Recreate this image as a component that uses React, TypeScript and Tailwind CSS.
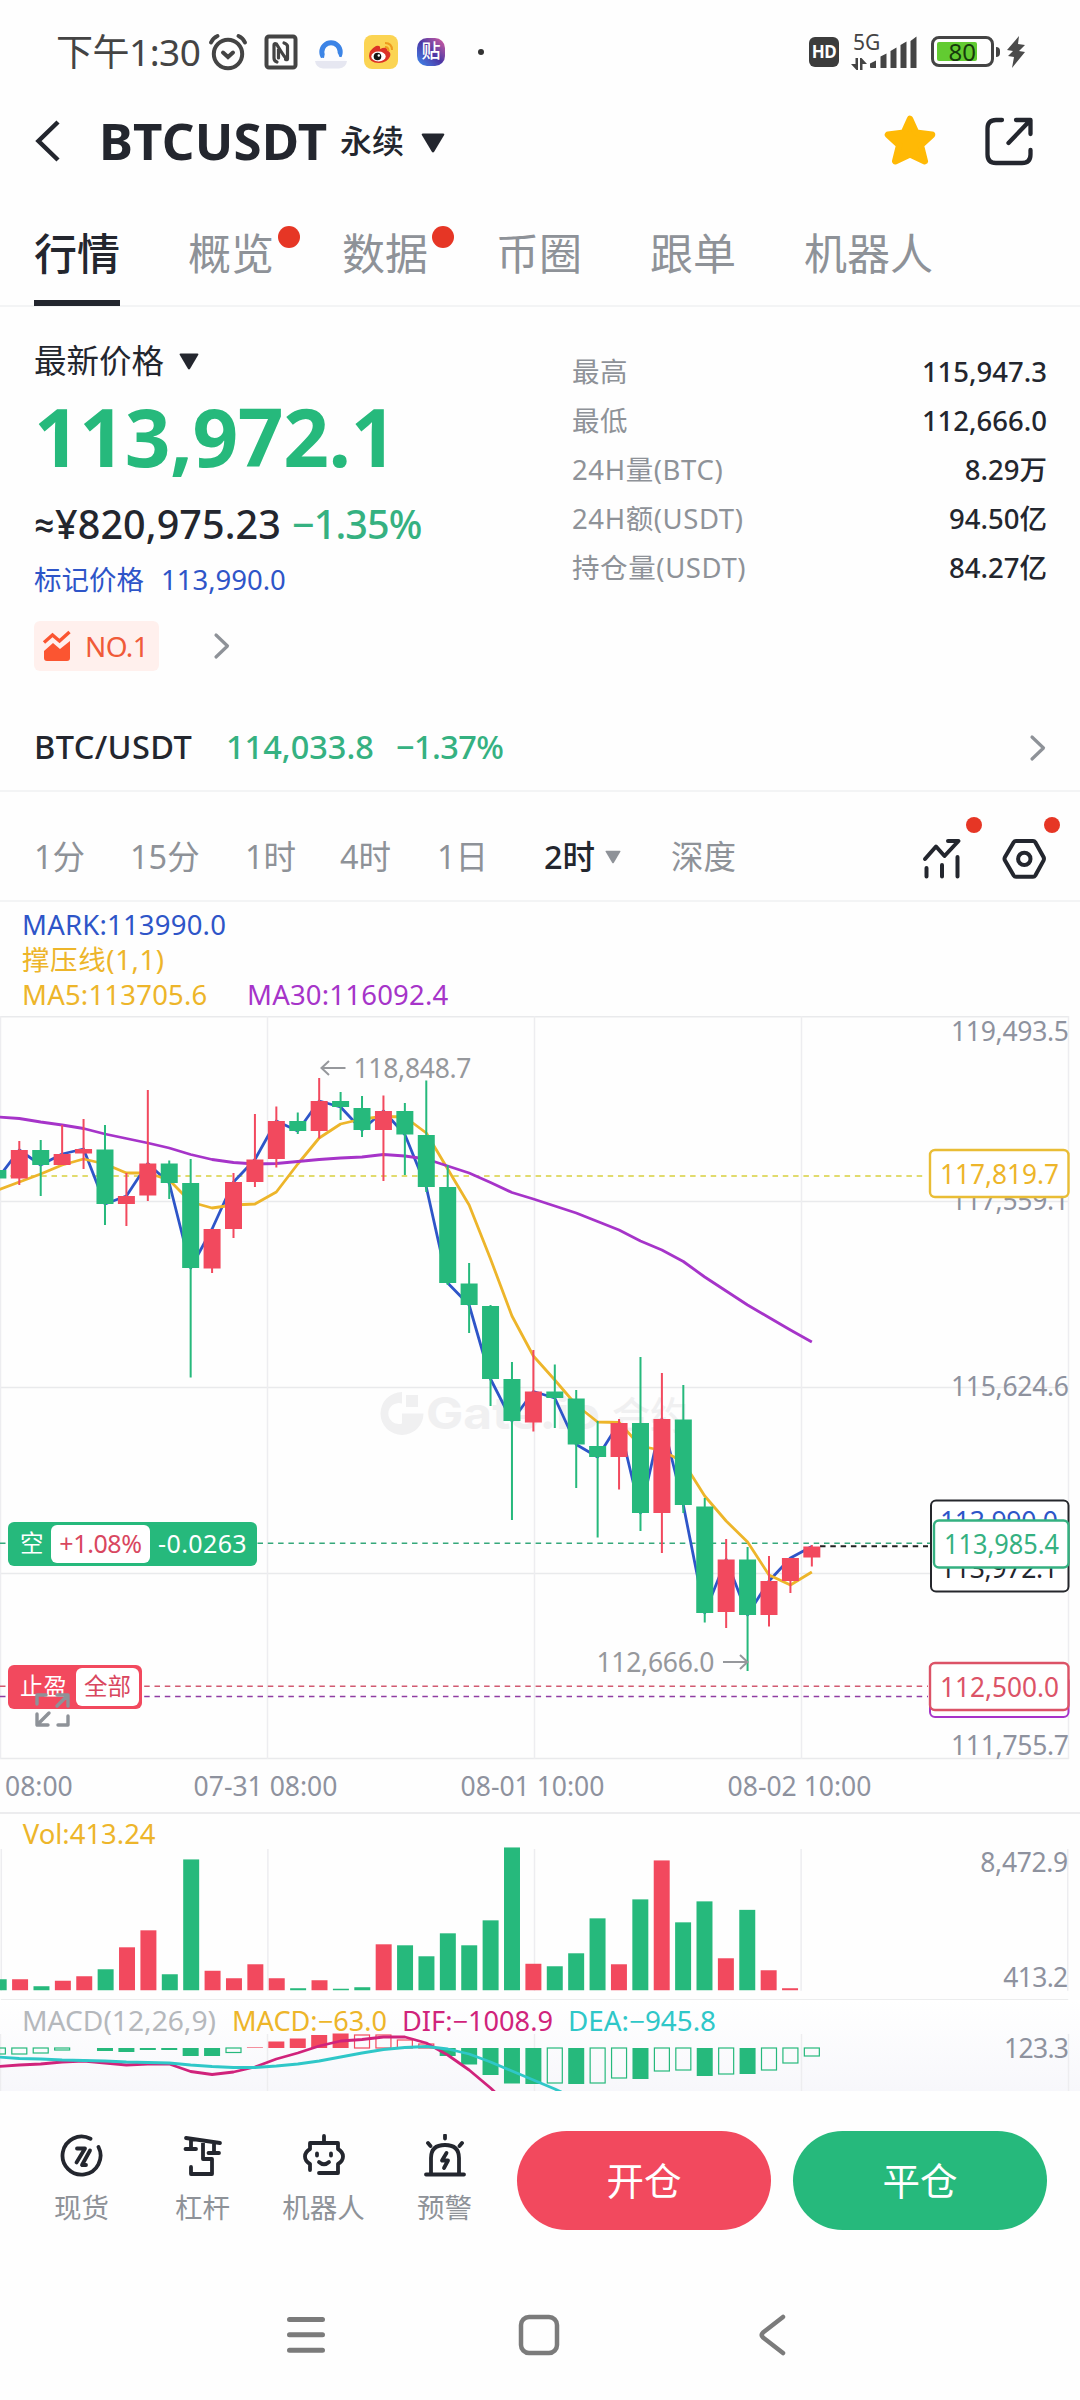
import type { ReactNode } from 'react'
import clsx from 'clsx'

const GREEN = '#26b97c'
const RED = '#f2495e'
const AMBER = '#edb52a'
const BLUE = '#2e55c8'
const PURPLE = '#a634c9'

const STEP = 21.42
const FIRST_X = 19.3
const BODY_W = 17

type Candle = {
  up: boolean
  high: number
  top: number
  bottom: number
  low: number
}

const c = (up: number, high: number, top: number, bottom: number, low: number): Candle => ({
  up: up === 1,
  high,
  top,
  bottom,
  low,
})

// first candle is cut off by the left edge
const candles: Candle[] = [
  c(0, 153, 154, 162.5, 163),
  c(1, 125, 134, 162.5, 169),
  c(0, 124, 134, 149, 180),
  c(1, 109, 138, 149, 149),
  c(1, 103, 133, 137.5, 153),
  c(0, 109, 133.5, 188, 209),
  c(1, 157, 180, 188, 210),
  c(1, 74, 147.5, 179.5, 185),
  c(0, 144.5, 147.5, 167, 183),
  c(0, 143, 167, 252, 361.5),
  c(1, 213, 213, 252.5, 257),
  c(1, 157, 166, 213, 222),
  c(1, 98, 143.5, 166, 171),
  c(1, 90.5, 105, 143, 151.5),
  c(0, 96.5, 105, 115, 118),
  c(1, 62, 85, 115, 122.5),
  c(0, 76, 85, 91, 104),
  c(0, 80, 92, 114, 121),
  c(1, 79.5, 95, 114, 165),
  c(0, 87, 95, 118.5, 159),
  c(0, 64.5, 119, 171, 176),
  c(0, 149, 171, 267, 269),
  c(0, 247, 267.5, 289, 317),
  c(0, 289, 290, 363, 390),
  c(0, 346, 363, 405, 504),
  c(1, 334, 375.5, 406.5, 415.5),
  c(0, 348.5, 375.5, 382, 412),
  c(0, 374, 382.5, 428.5, 472),
  c(0, 405, 430, 441, 521.5),
  c(1, 403, 407, 441, 473.5),
  c(0, 341, 407, 497, 515),
  c(1, 357, 403, 497, 537),
  c(0, 369, 403.5, 489, 497),
  c(0, 482, 490.5, 597, 606.5),
  c(1, 523, 543.5, 596, 612),
  c(0, 531, 543.5, 599, 655),
  c(1, 540, 565, 599, 610.5),
  c(1, 542, 542, 565, 577),
  c(1, 529, 530.5, 541.5, 550.5),
]

const ma5 = [
  174, 166, 158, 149, 143, 148, 157, 157, 164, 186, 192, 189, 188, 176, 148, 122, 108, 103, 100.5,
  101, 117, 153, 189, 243, 300, 340, 364, 389, 406, 406.5, 430, 434.5, 446, 480, 505, 526, 559, 569,
  556,
]

const ma30 = [
  101, 102.5, 106, 109, 112.5, 118, 122.5, 127, 132, 138.5, 143.5, 146.5, 148, 147.5, 145.5, 143.5,
  142, 141, 138.5, 140, 143, 150, 157, 166.5, 176.5, 183, 190, 197, 205.5, 214, 225, 234, 245.5,
  261, 275, 289, 301.5, 314, 326,
]

const volumes = [
  11, 11, 4, 9.5, 14, 21, 43, 60, 16, 131, 19.5, 12, 26, 12, 2, 10, 1.5, 3, 46, 45, 34, 57, 45, 70,
  143, 26.5, 24, 37, 72, 26, 91, 130, 68, 89, 32, 80.5, 20, 2,
]

// [value, filled], positive values are drawn above the zero line
const macd: [number, boolean][] = [
  [-6, false], [-6, false], [-5, false], [-2, false], [0, true], [-3, true], [-4, true], [-2, true],
  [-2, true], [-8, true], [-8, true], [-4.5, false], [0.6, true], [6.5, true], [9.5, true],
  [13, true], [14.5, true], [13, false], [13, false], [8, false], [4, false], [-8, true],
  [-16.5, true], [-27, true], [-35.5, true], [-36, true], [-35, false], [-36, true], [-35, false],
  [-30, false], [-31, true], [-23, false], [-22, false], [-28, true], [-26, false], [-26, true],
  [-22, false], [-15, false], [-8, false],
]

const dif = [
  66.5, 65, 64, 62, 61, 63, 65, 64, 64, 71.5, 74.5, 72, 67, 59, 53, 46, 41, 39.5, 37, 37, 43, 55, 70,
  88, 108,
]

const dea = [
  57, 58.5, 59, 60, 60.5, 61, 62, 62.5, 63, 65, 66.5, 67.5, 67.5, 66, 64, 61, 57, 53, 49.5, 47.5,
  46.5, 49, 54, 62, 71, 80, 89, 99,
]

const xAt = (i: number) => FIRST_X + (i - 1) * STEP
const line = (ys: number[]) => ys.map((y, i) => `${xAt(i)},${y}`).join(' ')
const closes = candles.map((k) => (k.up ? k.top : k.bottom))

function Triangle({ className }: { className: string }) {
  return (
    <svg viewBox="0 0 24 20" className={className} fill="currentColor">
      <path d="M2 0.5h20q2 0 1 1.8L13.3 18.6q-1.3 1.8-2.6 0L1 2.3Q0 .5 2 .5z" />
    </svg>
  )
}

function ChevronRight({ className }: { className: string }) {
  return (
    <svg viewBox="0 0 18 28" className={className} fill="none" stroke="#8e9298" strokeWidth="3.2" strokeLinecap="round" strokeLinejoin="round">
      <path d="M3 3l11.5 11L3 25" />
    </svg>
  )
}

function StatusBar() {
  return (
    <div className="flex h-[104px] items-center pl-[56px] pr-[54px] text-[#444]">
      <span className="w-[152px] whitespace-nowrap text-[37px] leading-none tracking-[-0.5px]">下午1:30</span>
      <svg width="40" height="38" viewBox="0 0 40 38" fill="none" stroke="currentColor" strokeWidth="4" strokeLinecap="round">
        <circle cx="20" cy="21" r="14.2" />
        <path d="M3 9.5Q5 5 9.5 3M37 9.5Q35 5 30.500 3" />
        <path d="M15 19.500l5 4.500 5-4.500" />
      </svg>
      <svg className="ml-[16px]" width="34" height="36" viewBox="0 0 34 36" fill="none" stroke="currentColor" strokeWidth="4" strokeLinejoin="round" strokeLinecap="round">
        <rect x="2.500" y="2.500" width="29" height="31" rx="2.500" />
        <path strokeWidth="3.200" d="M13 28q-3-1-3-4V11q0-2 2.500-1 6.500 11 9.500 14.500M20 9q3 1 3.500 3v13q0 1-2 .5M14.500 15v9" />
      </svg>
      {/* browser, weibo and tieba notifications */}
      <svg className="ml-[16px]" width="34" height="36" viewBox="0 0 34 36">
        <circle cx="17" cy="18" r="9.200" fill="none" stroke="#3c84e6" strokeWidth="5" />
        <path d="M2 27q4-4 8-3 1-8 7.500-8 6 0 8 7 5-.5 7 5-1 6-8 6.500H9Q2 34 2 27z" fill="#fbfbfe" />
        <path d="M1 27h32q-1 7-8 7.500H9Q2 34 1 27z" fill="#e6e7f1" />
      </svg>
      <svg className="ml-[16px]" width="34" height="36" viewBox="0 0 34 36">
        <rect x="0" y="1" width="34" height="34" rx="8" fill="#fbd453" />
        <path d="M5 22q0-6 7-10 5-1 4 3 7-3 7.500 1.500 4 2 2.500 6Q23 29 15 29 5 28.500 5 22z" fill="#dc3226" />
        <ellipse cx="14.500" cy="22.500" rx="7.200" ry="5" fill="#fff" />
        <circle cx="13.500" cy="22.500" r="3.800" fill="#151515" />
        <circle cx="14.800" cy="21.500" r="1.200" fill="#fff" />
        <path d="M21 9q7 0 7 7M21 13q3.500 0 3.500 4" fill="none" stroke="#ee9a1d" strokeWidth="2" />
      </svg>
      <span className="ml-[19px] flex h-[28px] w-[28px] items-center justify-center rounded-[10px] bg-linear-to-bl from-[#e0569c] via-[#4a35a5] to-[#2f8bf0] text-[19px] font-medium leading-none text-white">
        贴
      </span>
      <span className="ml-[33px] h-[6px] w-[6px] rounded-full bg-[#333]" />

      <span className="ml-auto flex h-[30px] w-[30px] items-center justify-center rounded-[6px] bg-[#3c3c3c] text-[17px] font-bold leading-none tracking-[-0.5px] text-white">
        HD
      </span>
      <div className="ml-[12px] flex h-[36px] w-[19px] flex-col justify-between whitespace-nowrap">
        <span className="pl-[2px] text-[21px] leading-[17px]">5G</span>
        <svg width="16" height="12" viewBox="0 0 16 12" fill="currentColor">
          <path d="M4.500 0h2.500v12H5.500L0 6h4.500zM9 12V0h1.500L16 6h-4.500v6z" />
        </svg>
      </div>
      <svg className="-ml-px" width="50" height="34" viewBox="0 0 50 34" fill="currentColor">
        <path d="M1 32.500v-4l6-3v7.500H2zM11.500 33V21.500l6-3V33zM21.500 33V16l6-3.500V33zM31.500 33V10l6-3.500V33zM41.500 33V6l6-4.500V33z" />
      </svg>
      <span className="ml-[12px] flex h-[31px] w-[63px] rounded-[8px] border-[3px] border-[#444] p-[3px]">
        <span className="flex h-full w-[40px] items-center justify-end rounded-[2px] bg-[#62cb31] pr-px text-[24px] leading-none text-[#173a0c]">80</span>
      </span>
      <span className="ml-[2px] h-[10px] w-[4px] rounded-r bg-[#444]" />
      <svg className="ml-[6px]" width="20" height="32" viewBox="0 0 20 32" fill="#4a4a4a">
        <path d="M13 0L1 14l6 1-5 5 6 1-2 11L19 16l-6-1 6-6-7-1z" />
      </svg>
    </div>
  )
}

function Header() {
  return (
    <header className="flex h-[74px] items-center pl-[34px] pr-[46px] text-[#23262e]">
      <svg width="28" height="44" viewBox="0 0 28 44" fill="none" stroke="currentColor" strokeWidth="4.500">
        <path d="M24 3L4.500 22 24 41" />
      </svg>
      <h1 className="ml-[37px] w-[241px] whitespace-nowrap text-[51px] font-bold leading-none tracking-[0.2px]">BTCUSDT</h1>
      <span className="text-[32px] font-medium leading-none">永续</span>
      <Triangle className="ml-[17px] mt-1 h-[20px] w-[24px]" />
      <svg className="ml-auto" width="54" height="52" viewBox="0 0 54 52" fill="#ffb905">
        <path
          d="M27 4l6.200 13.800 15.800 2-11.200 10.400 4 16L27 39.200 12.200 46.200l4-16L5 19.800l15.800-2z"
          stroke="#ffb905"
          strokeWidth="6.500"
          strokeLinejoin="round"
        />
      </svg>
      <svg className="ml-[47px]" width="50" height="50" viewBox="0 0 50 50" fill="none" stroke="currentColor" strokeWidth="4.300" strokeLinecap="round" strokeLinejoin="round">
        <path d="M18 4H12q-8.500 0-8.500 8.500v26Q3.500 47 12 47h26q8.500 0 8.500-8.500V34" />
        <path d="M32 4h14.500v14M46 4.500L24.500 27" />
      </svg>
    </header>
  )
}

const tabs = [
  { name: '行情', active: true },
  { name: '概览', dot: true },
  { name: '数据', dot: true },
  { name: '币圈' },
  { name: '跟单' },
  { name: '机器人' },
]

function Tabs() {
  return (
    <nav className="flex h-[129px] gap-[68px] border-b-2 border-[#f3f4f5] pl-[34px]">
      {tabs.map((tab) => (
        <div
          key={tab.name}
          className={clsx(
            'relative flex h-[128px] items-center border-b-[6px] pt-[29px] text-[43px] leading-none',
            tab.active ? 'border-[#23262e] font-medium text-[#23262e]' : 'border-transparent text-[#8e9298]',
          )}
        >
          {tab.name}
          {tab.dot && <span className="absolute -right-[26px] top-[48px] h-[22px] w-[22px] rounded-full bg-[#e63625]" />}
        </div>
      ))}
    </nav>
  )
}

const stats = [
  { label: '最高', value: '115,947.3' },
  { label: '最低', value: '112,666.0' },
  { label: '24H量(BTC)', value: '8.29万' },
  { label: '24H额(USDT)', value: '94.50亿' },
  { label: '持仓量(USDT)', value: '84.27亿' },
]

function PriceSummary() {
  return (
    <section className="flex h-[398px] pl-[34px] pr-[33px] text-[#23262e]">
      <div className="w-[538px]">
        <div className="mt-[35px] flex h-[40px] items-center text-[32.500px] leading-none">
          最新价格
          <Triangle className="ml-[15px] h-[17px] w-[20px]" />
        </div>
        <div className="mt-[9px] h-[84px] whitespace-nowrap text-[80px] font-bold leading-[90px] tracking-[-0.4px] text-[#26b97c]">
          113,972.1
        </div>
        <div className="mt-[20px] flex h-[60px] items-center whitespace-nowrap text-[39.500px] font-medium leading-none">
          <span className="w-[21px] font-['Roboto'] text-[36px]">≈</span>
          <span className="w-[237px] tracking-[0.1px]">¥820,975.23</span>
          <span className="tracking-[-0.9px] text-[#35b181]">−1.35%</span>
        </div>
        <div className="mt-[5px] flex h-[40px] items-center text-[27.500px] leading-none text-[#2e55c8]">
          <span className="w-[127px]">标记价格</span>
          <span>113,990.0</span>
        </div>
        <div className="mt-[21px] flex items-center">
          <div className="flex h-[50px] w-[125px] items-center rounded-[6px] bg-[#fff0ed] pl-[8px] text-[28px] leading-none text-[#f05b39]">
            <svg width="30" height="32" viewBox="0 0 30 32" fill="#fb5531">
              <path d="M2 21l9-8 7 6 10-8v17q0 3-3 3H5q-3 0-3-3z" />
              <path d="M2 12.500L10.500 5l7 6L27.500 2" fill="none" stroke="#fb5531" strokeWidth="3.400" />
            </svg>
            <span className="ml-[13px] tracking-[-0.6px]">NO.1</span>
          </div>
          <ChevronRight className="ml-[54px] h-[28px] w-[18px]" />
        </div>
      </div>
      <dl className="mt-[41px] flex flex-1 flex-col text-[27.500px]">
        {stats.map((row) => (
          <div key={row.label} className="flex h-[49px] items-center justify-between leading-none">
            <dt className="tracking-[0.6px] text-[#8e9298]">{row.label}</dt>
            <dd className="font-medium">{row.value}</dd>
          </div>
        ))}
      </dl>
    </section>
  )
}

function SpotRow() {
  return (
    <div className="flex h-[88px] items-center whitespace-nowrap border-b-2 border-[#f3f4f5] pl-[34px] pr-[33px] pt-[1px] text-[32.500px] font-medium leading-none">
      <span className="w-[192px] tracking-[0.4px] text-[#23262e]">BTC/USDT</span>
      <span className="w-[170px] text-[#35b181]">114,033.8</span>
      <span className="tracking-[-0.6px] text-[#35b181]">−1.37%</span>
      <ChevronRight className="ml-auto h-[28px] w-[18px]" />
    </div>
  )
}

function Intervals() {
  return (
    <div className="flex h-[110px] items-center whitespace-nowrap border-b-2 border-[#f3f4f5] pl-[34px] pt-[23px] text-[32.500px] leading-none text-[#8e9298]">
      <span className="w-[96px]">1分</span>
      <span className="w-[115px]">15分</span>
      <span className="w-[95px]">1时</span>
      <span className="w-[97px]">4时</span>
      <span className="w-[107px]">1日</span>
      <span className="flex w-[127px] items-center font-medium text-[#23262e]">
        2时
        <Triangle className="ml-[10px] h-[14px] w-[16px] text-[#8e9298]" />
      </span>
      <span>深度</span>
      <div className="relative ml-auto text-[#23262e]">
        <svg className="mt-[3px]" width="40" height="44" viewBox="0 0 40 44" fill="none" stroke="currentColor" strokeWidth="4" strokeLinecap="round" strokeLinejoin="round">
          <path d="M3 22L14 9.500l8.500 9.500L36.500 4H26M4.500 31v8.500M20 28v11.500M35.500 20v19.500" />
        </svg>
        <span className="absolute -right-[20px] -top-[17px] h-[16px] w-[16px] rounded-full bg-[#e63625]" />
      </div>
      <div className="relative ml-[40px] mr-[34px] text-[#23262e]">
        <svg className="mt-[3px]" width="44" height="44" viewBox="0 0 44 44" fill="none" stroke="currentColor" strokeWidth="4" strokeLinejoin="round">
          <path d="M14 4h17q1.500 0 2.300 1.300L41.500 20q.9 1.800 0 3.600l-8.200 14.900Q32.500 39.800 31 39.800H14q-1.500 0-2.300-1.300L3 23.600Q2 21.800 3 20l8.700-14.700Q12.500 4 14 4z" />
          <circle cx="22.300" cy="21.900" r="6.200" />
        </svg>
        <span className="absolute -right-[14px] -top-[17px] h-[16px] w-[16px] rounded-full bg-[#e63625]" />
      </div>
    </div>
  )
}

function Legend() {
  return (
    <div className="flex h-[114px] flex-col whitespace-nowrap pl-[22px] pt-[5px] text-[27.500px] leading-[35px] tracking-[0.2px]">
      <span className="text-[#2e55c8]">MARK:113990.0</span>
      <span className="tracking-[0.6px] text-[#edb52a]">撑压线(1,1)</span>
      <div className="flex">
        <span className="w-[225px] text-[#edb52a]">MA5:113705.6</span>
        <span className="text-[#a634c9]">MA30:116092.4</span>
      </div>
    </div>
  )
}

function Grid({ from, to }: { from: number; to: number }) {
  return (
    <path
      d={`M.5 ${from}V${to}M267.500 ${from}V${to}M534.500 ${from}V${to}M801.500 ${from}V${to}M1068.500 ${from}V${to}`}
      stroke="#ededf0"
      strokeWidth="1.500"
      fill="none"
    />
  )
}

function PriceTag({ x, y, h = 47, color, text, label }: { x: number; y: number; h?: number; color: string; text: string; label?: string }) {
  return (
    <g>
      <rect x={x} y={y} width={1068.5 - x} height={h} rx="5" fill="#fff" stroke={color} strokeWidth="2.400" />
      <text x={x + 10} y={y + h / 2 + 10} fill={label ?? color} textLength={1049 - x} lengthAdjust="spacingAndGlyphs">
        {text}
      </text>
    </g>
  )
}

function Badge({ className, children }: { className: string; children: ReactNode }) {
  return (
    <div className={clsx('absolute left-[8px] flex h-[44px] items-center rounded-[6px] p-[3px] text-[23.500px] leading-none text-white', className)}>
      {children}
    </div>
  )
}

function CandleChart() {
  return (
    <div className="relative h-[744px]">
      <svg width="1080" height="744" viewBox="0 0 1080 744" fontSize="26.500" className="block">
        <path d="M0 .7H1069M0 185.500H1069M0 371.500H1069M0 557.500H1069M0 742.500H1069" stroke="#e9eaec" strokeWidth="1.500" />
        <Grid from={0} to={743} />

        {/* watermark */}
        <g fill="#f0f0f1" fontFamily="Inter, 'Noto Sans CJK SC', sans-serif">
          <path d="M402 376a21.500 21.500 0 1 0 21.500 21.500H402v10a10.500 10.500 0 1 1 0-20z" />
          <rect x="406" y="379" width="12" height="12" />
          <text x="426" y="413" fontSize="44" fontWeight="700" textLength="174" lengthAdjust="spacingAndGlyphs">Gate.io</text>
          <text x="612" y="413" fontSize="38" fontWeight="500">合约</text>
        </g>

        <g fill="#8e929e">
          <text x="951" y="24.500" textLength="118">119,493.5</text>
          <text x="951" y="194" textLength="118">117,559.1</text>
          <text x="951" y="380" textLength="118">115,624.6</text>
          <text x="951" y="738.500" textLength="118">111,755.7</text>
        </g>

        <g fill="none" strokeWidth="1.600" strokeDasharray="5.500 4.800">
          <path d="M0 160H927" stroke="#d8cf3e" />
          <path d="M0 527.300H932" stroke="#35a87b" />
          <path d="M820 530.300H928" stroke="#222" strokeWidth="2" />
          <path d="M0 670.300H928" stroke="#d25a70" />
          <path d="M0 680.500H928" stroke="#8f3da3" />
        </g>

        <g fill="none" strokeWidth="2.800" strokeLinejoin="round">
          <polyline points={line(closes)} stroke={BLUE} />
          <polyline points={line(ma5)} stroke={AMBER} />
          <polyline points={line(ma30)} stroke={PURPLE} />
        </g>

        {candles.map((k, i) => (
          <g key={i} fill={k.up ? RED : GREEN}>
            <rect x={xAt(i) - 1} y={k.high} width="2" height={k.low - k.high} />
            <rect x={xAt(i) - BODY_W / 2} y={k.top} width={BODY_W} height={k.bottom - k.top} />
          </g>
        ))}

        <g fill="#96989c" stroke="none">
          <text x="353.500" y="62" textLength="118">118,848.7</text>
          <text x="596.500" y="655.500" textLength="118">112,666.0</text>
          <path d="M329 45l-7.500 7 7.500 7M322 52h23.500M740 639l7.500 7-7.500 7M723 646h24" fill="none" stroke="#96989c" strokeWidth="2" />
        </g>

        <PriceTag x={930} y={134} color="#e9bd35" label="#edb52a" text="117,819.7" />
        {/* mark and last price share one frame behind the position price */}
        <rect x="931" y="484.500" width="137.500" height="91" rx="5" fill="#fff" stroke="#25272c" strokeWidth="2" />
        <text x="940" y="515" fill={BLUE} textLength="118">113,990.0</text>
        <text x="940" y="561.500" fill="#23262e" textLength="118">113,972.1</text>
        <PriceTag x={934} y={504.5} color="#35b181" text="113,985.4" />
        <rect x="930" y="660" width="138.500" height="41" rx="5" fill="#fff" stroke={PURPLE} strokeWidth="2" />
        <PriceTag x={930} y={647} color="#dc5367" text="112,500.0" />
      </svg>

      <Badge className="top-[506px] w-[249px] bg-[#26b97c]">
        <span className="w-[40px] pl-[9px]">空</span>
        <span className="flex h-full w-[99px] items-center justify-center rounded-[6px] bg-white text-[25px] tracking-[-0.4px] text-[#d9475f]">+1.08%</span>
        <span className="pl-[8px] text-[25px] tracking-[0.4px]">-0.0263</span>
      </Badge>
      <Badge className="top-[649px] w-[134px] bg-[#f2495e]">
        <span className="w-[65px] pl-[9px]">止盈</span>
        <span className="flex h-full flex-1 items-center justify-center rounded-[6px] bg-white text-[#d9475f]">全部</span>
      </Badge>
      <svg className="absolute left-[34px] top-[675px]" width="38" height="38" viewBox="0 0 38 38" fill="none" stroke="#8e9298" strokeWidth="3.400" strokeLinecap="round" strokeLinejoin="round">
        <path d="M3 13V4h9M23 4h11v11M34 4L23 15M34 25v9H24M3 23v11h11M3 34l12-12" />
      </svg>
    </div>
  )
}

function TimeAxis() {
  return (
    <div className="h-[54px] border-b-2 border-[#ececee] text-[26.500px] leading-[52px] text-[#8e929e]">
      <div className="flex whitespace-nowrap pl-[5px]">
        <span className="w-[127px]">08:00</span>
        <span className="w-[267px] text-center">07-31 08:00</span>
        <span className="w-[267px] text-center">08-01 10:00</span>
        <span className="w-[267px] text-center">08-02 10:00</span>
      </div>
    </div>
  )
}

function VolumeChart() {
  return (
    <svg width="1080" height="187" viewBox="0 0 1080 187" className="block" fontSize="26.500">
      <Grid from={35} to={177} />
      <text x="22" y="30" fill={AMBER} textLength="133" lengthAdjust="spacingAndGlyphs">Vol:413.24</text>
      {volumes.map((v, i) => (
        <rect key={i} x={xAt(i) - 8} y={176.5 - v} width="16" height={v} fill={candles[i].up ? RED : GREEN} />
      ))}
      <g fill="#8e929e">
        <text x="981" y="58" textLength="88">8,472.9</text>
        <text x="1004" y="173" textLength="65">413.2</text>
      </g>
      <path d="M0 186.500H1069" stroke="#e6e7e9" strokeWidth="2" />
    </svg>
  )
}

function MacdChart() {
  const zero = 48
  return (
    <div className="h-[91px] bg-linear-to-b from-white to-[#f7f7fb]">
      <svg width="1080" height="91" viewBox="0 0 1080 91" className="block" fontSize="26.500">
        <Grid from={34} to={91} />
        <text x="22" y="30.500" fill="#b5b8bc" textLength="194" lengthAdjust="spacingAndGlyphs">MACD(12,26,9)</text>
        <text x="232" y="30.500" fill={AMBER} textLength="155" lengthAdjust="spacingAndGlyphs">MACD:−63.0</text>
        <text x="402" y="30.500" fill="#d0237b" textLength="151" lengthAdjust="spacingAndGlyphs">DIF:−1008.9</text>
        <text x="568" y="30.500" fill="#2fc7c8" textLength="148" lengthAdjust="spacingAndGlyphs">DEA:−945.8</text>
        {macd.map(([v, filled], i) => {
          const color = v > 0 ? RED : GREEN
          const y = v > 0 ? zero - v : zero
          const h = Math.abs(v)
          return filled ? (
            <rect key={i} x={xAt(i) - 8} y={y} width="16" height={h} fill={color} />
          ) : (
            <rect key={i} x={xAt(i) - 7.5} y={y} width="15" height={h} fill="none" stroke={color} strokeWidth="1.200" />
          )
        })}
        <g fill="none" strokeWidth="2.800" strokeLinejoin="round">
          <polyline points={line(dif)} stroke="#d0237b" />
          <polyline points={line(dea)} stroke="#2fc7c8" />
        </g>
        <text x="1004" y="57.500" fill="#8e929e" textLength="65">123.3</text>
      </svg>
    </div>
  )
}

const shortcuts = [
  {
    name: '现货',
    icon: (
      <>
        <path d="M30.500 4.800A19 19 0 1 0 38.500 13" />
        <path d="M17 14.500h8l-8.500 14M30 16.500l-8 14.500h4" />
      </>
    ),
  },
  {
    name: '杠杆',
    icon: (
      <>
        <path d="M5 4l34 5M10 5v10M4.500 15H15M33 9v10M27.500 19H38M22 7v18h9v15H10v-7" />
      </>
    ),
  },
  {
    name: '机器人',
    icon: (
      <>
        <path d="M22 2v6M8 36V30Q3 27 3 22.500T8 15V9h28v6q5 3 5 7.500T36 30v9H17" />
        <path d="M15 19.500v2M29 19.500v2M17 28q5 4.500 10 0" />
      </>
    ),
  },
  {
    name: '预警',
    icon: (
      <>
        <path d="M3 40.500h38M8 40V24q0-13 14-13t14 13v16M22 1.500v3M5 9l2.500 3M39 9l-2.500 3" />
        <path d="M23.500 19L19 26.500h6L21 34" />
      </>
    ),
  },
]

function ActionBar() {
  return (
    <div className="flex h-[178px] items-start pl-[21px] pr-[33px] pt-[40px] text-[#23262e]">
      {shortcuts.map((item) => (
        <div key={item.name} className="flex w-[121px] flex-col items-center pt-[3px]">
          <svg width="44" height="44" viewBox="0 0 44 44" fill="none" stroke="currentColor" strokeWidth="3.800" strokeLinecap="round" strokeLinejoin="round">
            {item.icon}
          </svg>
          <span className="mt-[16px] text-[27.500px] leading-[28px] text-[#8e9298]">{item.name}</span>
        </div>
      ))}
      <button className="ml-[12px] h-[99px] w-[254px] rounded-full bg-[#f2495e] text-[37.500px] leading-none text-white">开仓</button>
      <button className="ml-[22px] h-[99px] w-[254px] rounded-full bg-[#26b97c] text-[37.500px] leading-none text-white">平仓</button>
    </div>
  )
}

function SystemNav() {
  return (
    <div className="flex h-[131px] items-center pl-[286px] text-[#7b7b7b]">
      <svg width="40" height="40" viewBox="0 0 40 40" fill="none" stroke="currentColor" strokeWidth="5" strokeLinecap="round">
        <path d="M3.500 4.500h33M3.500 19.800h33M3.500 35.200h33" />
      </svg>
      <svg className="ml-[192px]" width="42" height="42" viewBox="0 0 42 42" fill="none" stroke="currentColor" strokeWidth="4.500">
        <rect x="3" y="3" width="36" height="36" rx="8" />
      </svg>
      <svg className="ml-[198px]" width="30" height="42" viewBox="0 0 30 42" fill="none" stroke="currentColor" strokeWidth="4.500" strokeLinecap="round" strokeLinejoin="round">
        <path d="M25 3L5 18.500q-2.500 2.500 0 5L25 39" />
      </svg>
    </div>
  )
}

export default function App() {
  return (
    <div className="flex h-[2400px] w-[1080px] flex-col overflow-hidden bg-[#fefefe] font-['Noto_Sans','Noto_Sans_CJK_SC',sans-serif]">
      <StatusBar />
      <Header />
      <Tabs />
      <PriceSummary />
      <SpotRow />
      <Intervals />
      <Legend />
      <CandleChart />
      <TimeAxis />
      <VolumeChart />
      <MacdChart />
      <ActionBar />
      <SystemNav />
    </div>
  )
}
